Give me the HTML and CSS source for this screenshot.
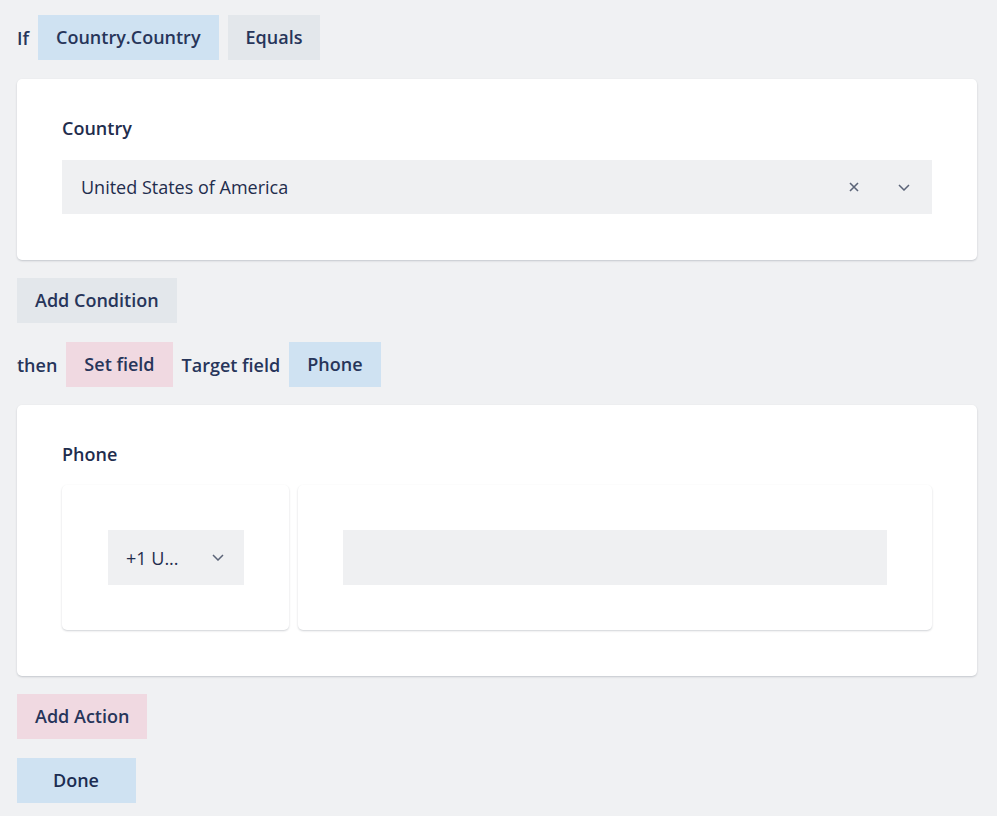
FILE: index.html
```html
<!DOCTYPE html>
<html lang="en">
<head>
    <meta charset="UTF-8">
    <title>Rule editor</title>
    <link rel="stylesheet" href="styles.css">
</head>
<body>
    <div class="rule">
        <div class="row first">
            <span class="word">If</span>
            <span class="pill blue">Country.Country</span>
            <span class="pill gray">Equals</span>
        </div>

        <div class="card">
            <div class="label">Country</div>
            <div class="select">
                <span class="value">United States of America</span>
                <span class="clear">
                    <svg width="10" height="10" viewBox="0 0 10 10"><path d="M1 1L9 9M9 1L1 9" stroke="#5b6478" stroke-width="1.6" fill="none"/></svg>
                </span>
                <span class="caret">
                    <svg width="12" height="7" viewBox="0 0 12 7"><path d="M1 1L6 6L11 1" stroke="#5b6478" stroke-width="1.5" fill="none"/></svg>
                </span>
            </div>
        </div>

        <div class="row add-condition">
            <span class="pill gray">Add Condition</span>
        </div>

        <div class="row">
            <span class="word">then</span>
            <span class="pill pink">Set field</span>
            <span class="word">Target field</span>
            <span class="pill blue">Phone</span>
        </div>

        <div class="card">
            <div class="label phone-label">Phone</div>
            <div class="phone">
                <div class="inner code">
                    <div class="select small">
                        <span class="value">+1 U...</span>
                        <span class="caret">
                            <svg width="12" height="7" viewBox="0 0 12 7"><path d="M1 1L6 6L11 1" stroke="#5b6478" stroke-width="1.5" fill="none"/></svg>
                        </span>
                    </div>
                </div>
                <div class="inner number">
                    <div class="field"></div>
                </div>
            </div>
        </div>

        <div class="row">
            <span class="pill pink">Add Action</span>
        </div>
        <div class="row last">
            <span class="pill blue done">Done</span>
        </div>
    </div>
</body>
</html>
```

FILE: styles.css
```css
body {
    margin: 0;
    background-color: #f0f1f3;
    font-family: "Open Sans", Arial, sans-serif;
    color: #1f2d4d;
}
.rule {
    padding: 15px 20px 12px 17px;
    display: flex;
    flex-direction: column;
    gap: 18px;
}
.row {
    display: flex;
    align-items: center;
    gap: 9px;
}
.first {
    margin-bottom: 1px;
}
.add-condition {
    margin-bottom: 1px;
}
.last {
    margin-top: 1px;
}
.word {
    font-size: 18px;
    font-weight: 600;
    color: #27355a;
}
.pill {
    font-size: 18px;
    font-weight: 600;
    line-height: 24px;
    padding: 10px 18px 11px;
    color: #27355a;
}
.blue {
    background-color: #cfe2f2;
}
.gray {
    background-color: #e3e7eb;
}
.pink {
    background-color: #f0d9e1;
}
.done {
    padding-left: 36px;
    padding-right: 37px;
    color: #1c2d52;
}
.card {
    background-color: #ffffff;
    border-radius: 5px;
    box-shadow: 0 1px 2px rgba(40, 50, 70, 0.22);
    padding: 37px 45px 46px;
}
.label {
    font-size: 18px;
    font-weight: 600;
    line-height: 24px;
    margin-bottom: 20px;
    color: #1f2d4d;
}
.phone-label {
    margin-bottom: 19px;
}
.select {
    display: flex;
    align-items: center;
    height: 54px;
    background-color: #eff0f2;
    padding: 0 22px 0 19px;
    font-size: 18px;
}
.select .value {
    flex: 1;
    color: #1f2d4d;
}
.clear {
    display: flex;
    margin-right: 39px;
}
.caret {
    display: flex;
}
.phone {
    display: flex;
    gap: 9px;
}
.inner {
    background-color: #ffffff;
    border-radius: 5px;
    box-shadow: 0 1px 2px rgba(40, 50, 70, 0.22);
    padding: 45px;
}
.code {
    width: 136px;
    padding-left: 46px;
}
.number {
    flex: 1;
}
.select.small {
    height: 55px;
    padding: 0 20px 0 18px;
}
.field {
    height: 55px;
    background-color: #eff0f2;
}
```
